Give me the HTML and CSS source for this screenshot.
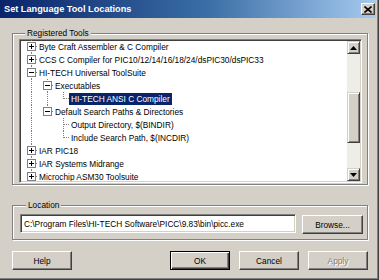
FILE: index.html
```html
<!DOCTYPE html>
<html>
<head>
<meta charset="utf-8">
<link rel="stylesheet" href="styles.css">
</head>
<body>
<div class="dialog">
  <div class="titlebar">
    <span class="title">Set Language Tool Locations</span>
    <span class="close"><svg width="8" height="7" viewBox="0 0 8 7"><path d="M0.5 0.5 L7.5 6.5 M7.5 0.5 L0.5 6.5" stroke="#000" stroke-width="1.6" fill="none"/></svg></span>
  </div>
  <div class="body">
    <div class="group g1">
      <div class="legend">Registered Tools</div>
      <div class="tree">
        <ul class="items">
          <li class="row"><span class="c c-t"><span class="box plus"></span></span><span class="lbl">Byte Craft Assembler &amp; C Compiler</span></li>
          <li class="row"><span class="c c-t"><span class="box plus"></span></span><span class="lbl">CCS C Compiler for PIC10/12/14/16/18/24/dsPIC30/dsPIC33</span></li>
          <li class="row"><span class="c c-t"><span class="box minus"></span></span><span class="lbl">HI-TECH Universal ToolSuite</span></li>
          <li class="row"><span class="c c-v"></span><span class="c c-t"><span class="box minus"></span></span><span class="lbl">Executables</span></li>
          <li class="row"><span class="c c-v"></span><span class="c c-v"></span><span class="c c-l"></span><span class="lbl sel">HI-TECH ANSI C Compiler</span></li>
          <li class="row"><span class="c c-v"></span><span class="c c-l"><span class="box minus"></span></span><span class="lbl">Default Search Paths &amp; Directories</span></li>
          <li class="row"><span class="c c-v"></span><span class="c"></span><span class="c c-t"></span><span class="lbl">Output Directory, $(BINDIR)</span></li>
          <li class="row"><span class="c c-v"></span><span class="c"></span><span class="c c-l"></span><span class="lbl">Include Search Path, $(INCDIR)</span></li>
          <li class="row"><span class="c c-t"><span class="box plus"></span></span><span class="lbl">IAR PIC18</span></li>
          <li class="row"><span class="c c-t"><span class="box plus"></span></span><span class="lbl">IAR Systems Midrange</span></li>
          <li class="row"><span class="c c-t"><span class="box plus"></span></span><span class="lbl">Microchip ASM30 Toolsuite</span></li>
        </ul>
        <div class="vscroll">
          <span class="sb-btn"><svg width="7" height="4" viewBox="0 0 7 4"><path d="M3.5 0 L7 4 L0 4 Z" fill="#000"/></svg></span>
          <span class="sb-gap"></span>
          <span class="sb-thumb"></span>
          <span class="sb-rest"></span>
          <span class="sb-btn"><svg width="7" height="4" viewBox="0 0 7 4"><path d="M0 0 L7 0 L3.5 4 Z" fill="#000"/></svg></span>
        </div>
      </div>
    </div>
    <div class="group g2">
      <div class="legend">Location</div>
      <div class="loc-row">
        <div class="field">C:\Program Files\HI-TECH Software\PICC\9.83\bin\picc.exe</div>
        <button class="btn browse">Browse...</button>
      </div>
    </div>
    <div class="buttons">
      <button class="btn">Help</button>
      <span class="spacer"></span>
      <button class="btn default">OK</button>
      <button class="btn">Cancel</button>
      <button class="btn disabled">Apply</button>
    </div>
  </div>
</div>
</body>
</html>
```
FILE: styles.css
```css
* { box-sizing: border-box; }
body {
  margin: 0;
  font-family: "Liberation Sans", Arial, sans-serif;
  font-size: 8.3px;
  color: #000;
}
.dialog {
  width: 379px;
  height: 280px;
  background: #d4d0c8;
  border-right: 1px solid #404040;
  border-bottom: 1px solid #404040;
  box-shadow: inset -1px -1px 0 #808080;
  display: flex;
  flex-direction: column;
}
.titlebar {
  height: 18px;
  margin-right: 2px;
  background: linear-gradient(to right, #0a246a 0%, #3a6ea5 55%, #a6caf0 100%);
  display: flex;
  align-items: center;
  justify-content: space-between;
  padding-left: 4px;
}
.title {
  color: #fff;
  font-weight: bold;
  font-size: 9.2px;
}
.close {
  width: 14px;
  height: 12px;
  margin-right: 1px;
  background: #d4d0c8;
  border: 1px solid;
  border-color: #fff #404040 #404040 #fff;
  box-shadow: inset -1px -1px 0 #808080;
  display: flex;
  align-items: center;
  justify-content: center;
}
.close svg { display: block; }
.body {
  padding: 15px 10px 0 12px;
  display: flex;
  flex-direction: column;
}
.group {
  border: 1px solid #808080;
  box-shadow: inset 1px 1px 0 #fff, 1px 1px 0 #fff;
}
.legend {
  margin: -7px 0 0 6px;
  padding: 0 2px;
  background: #d4d0c8;
  width: max-content;
  height: 12px;
  line-height: 12px;
}
.g1 { padding: 0 5px 1px 6px; }
.g2 { margin-top: 20px; padding: 0 4px 5px 7px; }

.tree {
  height: 144px;
  display: flex;
  background: #fff;
  border: 1px solid;
  border-color: #808080 #fff #fff #808080;
  box-shadow: inset 1px 1px 0 #404040, inset -1px -1px 0 #d4d0c8;
  padding: 1px;
}
.items {
  flex: 1;
  list-style: none;
  margin: -1px 0 0;
  padding: 0 0 0 2px;
  overflow: hidden;
}
.row {
  height: 13px;
  display: flex;
  align-items: center;
  white-space: nowrap;
}
.c {
  width: 16px;
  height: 13px;
  flex: none;
  display: flex;
  align-items: center;
}
.c-v {
  background: repeating-linear-gradient(to bottom, #808080 0 1px, transparent 1px 2px) 8px 0 / 1px 100% no-repeat;
}
.c-t {
  background:
    repeating-linear-gradient(to right, #808080 0 1px, transparent 1px 2px) 9px 6px / 5px 1px no-repeat,
    repeating-linear-gradient(to bottom, #808080 0 1px, transparent 1px 2px) 8px 0 / 1px 100% no-repeat;
}
.c-l {
  background:
    repeating-linear-gradient(to right, #808080 0 1px, transparent 1px 2px) 9px 6px / 5px 1px no-repeat,
    repeating-linear-gradient(to bottom, #808080 0 1px, transparent 1px 2px) 8px 0 / 1px 7px no-repeat;
}
.box {
  width: 9px;
  height: 9px;
  margin-left: 4px;
  border: 1px solid #808080;
  background: #fff;
}
.box.minus {
  background: linear-gradient(#000, #000) 1px 3px / 5px 1px no-repeat, #fff;
}
.box.plus {
  background:
    linear-gradient(#000, #000) 1px 3px / 5px 1px no-repeat,
    linear-gradient(#000, #000) 3px 1px / 1px 5px no-repeat,
    #fff;
}
.lbl {
  margin-left: -2px;
  padding: 0 2px;
  height: 12px;
  line-height: 12px;
}
.sel {
  background: #0a246a;
  color: #fff;
}

.vscroll {
  width: 13px;
  flex: none;
  display: flex;
  flex-direction: column;
  background: #eeede8;
}
.sb-btn, .sb-thumb {
  background: #d4d0c8;
  border: 1px solid;
  border-color: #d4d0c8 #404040 #404040 #d4d0c8;
  box-shadow: inset 1px 1px 0 #fff, inset -1px -1px 0 #808080;
}
.sb-btn {
  height: 13px;
  flex: none;
  display: flex;
  align-items: center;
  justify-content: center;
}
.sb-btn svg { display: block; }
.sb-gap { height: 38px; flex: none; }
.sb-thumb { height: 51px; flex: none; }
.sb-rest { flex: 1; }

.loc-row {
  margin-top: 3px;
  display: flex;
  align-items: flex-start;
  gap: 6px;
}
.field {
  flex: 1;
  height: 19px;
  background: #fff;
  border: 1px solid;
  border-color: #808080 #fff #fff #808080;
  box-shadow: inset 1px 1px 0 #404040, inset -1px -1px 0 #d4d0c8;
  padding-left: 3px;
  display: flex;
  align-items: center;
  white-space: nowrap;
  overflow: hidden;
}
.btn {
  width: 60px;
  height: 19px;
  margin: 0;
  padding: 0;
  background: #d4d0c8;
  border: 1px solid;
  border-color: #fff #404040 #404040 #fff;
  box-shadow: inset -1px -1px 0 #808080;
  font: inherit;
  color: #000;
  display: flex;
  align-items: center;
  justify-content: center;
}
.browse { width: 61px; margin-top: 1px; }
.btn.default {
  border-color: #000;
  box-shadow: inset 1px 1px 0 #fff, inset -1px -1px 0 #404040, inset -2px -2px 0 #808080;
}
.btn.disabled {
  color: #808080;
  text-shadow: 1px 1px 0 #fff;
}
.buttons {
  margin-top: 11px;
  display: flex;
  gap: 9px;
}
.spacer { flex: 1; }
```
